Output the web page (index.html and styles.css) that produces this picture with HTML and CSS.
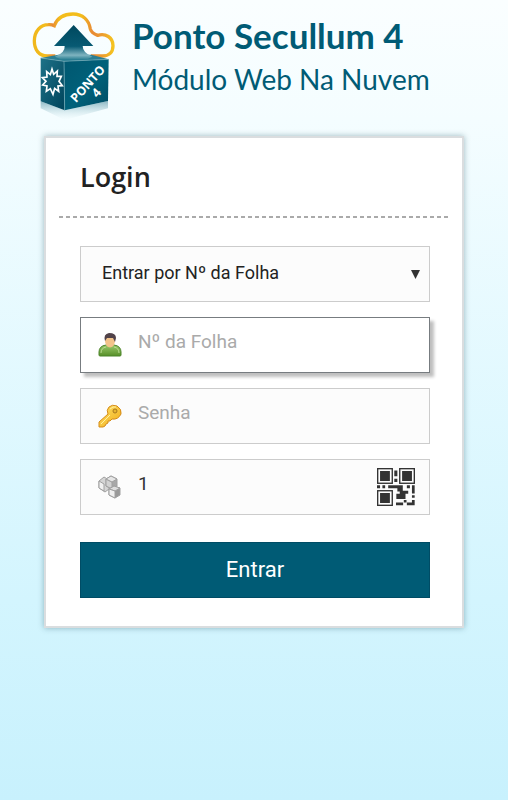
FILE: index.html
```
<!DOCTYPE html>
<html lang="pt-BR">
<head>
  <meta charset="UTF-8">
  <meta name="viewport" content="width=device-width, initial-scale=1.0">
  <title>Ponto Secullum 4</title>
  <link rel="stylesheet" href="styles.css">
</head>
<body>
  <header class="header">
    <svg class="logo" viewBox="0 0 330 375" aria-hidden="true">
      <defs>
        <linearGradient id="cloud" x1="0" y1="0" x2="1" y2="0">
          <stop offset="0" stop-color="#f0b71c"/>
          <stop offset=".14" stop-color="#f3bd1c"/>
          <stop offset=".23" stop-color="#e88a35"/>
          <stop offset=".32" stop-color="#f3bd1c"/>
          <stop offset=".6" stop-color="#f3bd1c"/>
          <stop offset=".74" stop-color="#e88a35"/>
          <stop offset=".86" stop-color="#ec9b30"/>
          <stop offset="1" stop-color="#f5c320"/>
        </linearGradient>
        <linearGradient id="arrow" x1="0" y1="0" x2="0" y2="1">
          <stop offset="0" stop-color="#00485e"/>
          <stop offset=".62" stop-color="#075a73"/>
          <stop offset=".88" stop-color="#7fb4c0"/>
          <stop offset="1" stop-color="#2f8295"/>
        </linearGradient>
        <linearGradient id="side" x1="0" y1="0" x2="1" y2="1">
          <stop offset="0" stop-color="#1e7288"/>
          <stop offset="1" stop-color="#00445b"/>
        </linearGradient>
        <linearGradient id="front" x1="0" y1="0" x2="1" y2="1">
          <stop offset="0" stop-color="#005770"/>
          <stop offset=".55" stop-color="#00617a"/>
          <stop offset="1" stop-color="#004b63"/>
        </linearGradient>
        <linearGradient id="shade" x1="0" y1="0" x2="0" y2="1">
          <stop offset="0" stop-color="#5d98a8" stop-opacity=".7"/>
          <stop offset="1" stop-color="#c9e5eb" stop-opacity="0"/>
        </linearGradient>
      </defs>
      <path d="M62 304L134 331L264 303V325L134 360L62 325Z" fill="url(#shade)"/>
      <path d="M106 168H82C56 168 43 148 43 123C43 93 62 74 85 74Q95 73 103 77C112 53 132 42 159 42C188 42 207 60 211 87Q213 98 233 106C257 98 279 113 279 137C279 157 267 168 247 168H213" fill="none" stroke="url(#cloud)" stroke-width="10"/>
      <path d="M62 174L115 164H214L266 178L132 184Z" fill="#2b7e92"/>
      <path d="M161 75L220 138H188Q188 158 217 170L202 178H122L105 170Q136 158 134 138H102Z" fill="url(#arrow)"/>
      <path d="M62 174L132 184L134 331L62 304Z" fill="url(#side)"/>
      <path d="M132 184L266 178L264 303L134 331Z" fill="url(#front)"/>
      <path d="M62 174L132 184L266 178M132 184L134 331" fill="none" stroke="#76adba" stroke-width="2"/>
      <path d="M96 207L101 223L112 213L111 229L124 229L117 244L127 257L114 258L116 274L104 265L99 283L91 266L79 274L81 258L68 255L78 244L67 233L81 231L80 215L91 224Z" fill="none" stroke="#fff" stroke-width="5"/>
      <g class="logo-text">
        <text x="168" y="310" transform="rotate(-48 168 310)">PONTO</text>
        <text x="232" y="295" transform="rotate(-48 232 295)">4</text>
      </g>
    </svg>
    <div class="brand">
      <h1>Ponto Secullum 4</h1>
      <p>Módulo Web Na Nuvem</p>
    </div>
  </header>

  <main class="card">
    <h2>Login</h2>
    <form class="login-form">
      <div class="field field-select">
        <select aria-label="Tipo de login">
          <option>Entrar por Nº da Folha</option>
        </select>
        <svg class="caret" viewBox="0 0 9 9" aria-hidden="true"><path d="M0 0H9L4.5 9Z" fill="#333"/></svg>
      </div>

      <div class="field active">
        <svg class="icon" viewBox="0 0 24 24" aria-hidden="true">
          <defs>
            <linearGradient id="shirt" x1="0" y1="0" x2="0" y2="1">
              <stop offset="0" stop-color="#9bc96b"/>
              <stop offset="1" stop-color="#568f28"/>
            </linearGradient>
          </defs>
          <path d="M1 22V19Q1 13 8 12H16Q23 13 23 19V22Q23 23 22 23H2Q1 23 1 22Z" fill="url(#shirt)" stroke="#4d852b"/>
          <path d="M3 20Q3 15 8 14M21 20Q21 15 16 14" fill="none" stroke="#b9da91"/>
          <path d="M8 12Q12 17 16 12L15 10H9Z" fill="#efbf83"/>
          <ellipse cx="12" cy="8" rx="5" ry="6" fill="#f2c38a"/>
          <path d="M7 8Q5 1 11 0Q18 0 18 5L17 9L15 5H9Z" fill="#514249"/>
        </svg>
        <input type="text" placeholder="Nº da Folha" aria-label="Nº da Folha">
      </div>

      <div class="field">
        <svg class="icon" viewBox="0 0 24 24" aria-hidden="true">
          <defs>
            <linearGradient id="gold" x1="0" y1="0" x2="1" y2="1">
              <stop offset="0" stop-color="#ffe36a"/>
              <stop offset="1" stop-color="#efaa15"/>
            </linearGradient>
          </defs>
          <path d="M11 3Q14 0 19 2Q24 5 23 10Q20 16 14 15L12 17L10 17V19L8 20L7 22L5 23H1V18L10 10Q8 6 11 3Z" fill="url(#gold)" stroke="#d58b18"/>
          <path d="M3 20L12 11M12 5Q15 2 18 3" fill="none" stroke="#fff0a0"/>
          <circle cx="17" cy="7" r="2" fill="#e7b52d" stroke="#a87820"/>
        </svg>
        <input type="password" placeholder="Senha" aria-label="Senha">
      </div>

      <div class="field">
        <svg class="icon" viewBox="0 0 24 24" aria-hidden="true">
          <g stroke="#a0a0a0" stroke-linejoin="round">
            <path d="M1 6L6 2L11 5V14L7 17L1 13Z" fill="#d5d5d5"/>
            <path d="M1 6L6 9V16L1 13Z" fill="#f1f1f1"/>
            <path d="M8 4L13 1L19 4V11L14 14L8 11Z" fill="#a8a8a8"/>
            <path d="M8 4L14 7V14L8 11Z" fill="#d2d2d2"/>
            <path d="M8 4L13 1L19 4L14 7Z" fill="#e6e6e6"/>
            <path d="M11 14L16 11L22 13V20L17 23L11 20Z" fill="#999"/>
            <path d="M11 14L16 11L22 13L17 16Z" fill="#ddd"/>
            <path d="M11 14L17 16V23L11 20Z" fill="#efefef"/>
          </g>
        </svg>
        <input type="text" value="1" aria-label="Número do banco">
        <button type="button" class="qr-button" aria-label="Ler QR Code">
          <svg viewBox="0 0 112 112" fill="#333" aria-hidden="true">
            <g fill="none" stroke="#333" stroke-width="4">
              <rect x="2" y="2" width="43" height="43"/>
              <rect x="67" y="2" width="43" height="43"/>
              <rect x="2" y="67" width="43" height="43"/>
            </g>
            <path d="M9 9H38V38H9ZM74 9H103V38H74ZM9 74H38V103H9Z"/>
            <path d="M51 7H60V24H51ZM51 32H60V41H51ZM0 51H9V60H0ZM16 51H24V60H16ZM33 51H76V69H60V60H33ZM88 51H97V60H88ZM103 51H111V75H103ZM67 67H92V76H84V91H57V76H67ZM103 80H111V88H103ZM103 94H111V110H88V102H103ZM79 94H87V102H79ZM56 102H77V110H56Z"/>
          </svg>
        </button>
      </div>

      <button type="submit" class="submit">Entrar</button>
    </form>
  </main>
</body>
</html>
```
FILE: styles.css
```
* {
  box-sizing: border-box;
}
html {
  min-height: 100%;
  background: linear-gradient(#fafeff 0, #f4fdff 15%, #d3f5fe 75%, #c8f1fd 100%);
}
body {
  max-width: 508px;
  margin: 0 auto;
  padding: 0 44px 32px;
  font-family: Roboto, sans-serif;
  color: #222;
}
.header {
  display: flex;
  height: 136px;
  margin-left: -24px;
}
.logo {
  flex: none;
  width: 110px;
  height: 125px;
}
.logo-text {
  font: bold 37px "Open Sans", sans-serif;
  fill: #fff;
}
.brand {
  padding: 11px 0 0 2px;
  color: #005b75;
  font-family: Lato, sans-serif;
  white-space: nowrap;
}
.brand h1 {
  margin: 0;
  font-size: 35px;
  line-height: 48px;
  font-weight: bold;
}
.brand p {
  margin: 0;
  font-size: 28px;
  line-height: 40px;
}
.card {
  padding: 0 12px 28px 13px;
  background: #fff;
  border: 2px solid #dadddf;
  box-shadow: 0 0 6px rgba(0, 60, 75, 0.35);
}
.card h2 {
  margin: 0;
  padding: 18px 21px 20px;
  background: repeating-linear-gradient(90deg, #aaa 0 4px, transparent 4px 7px) bottom / 100% 2px no-repeat;
  font-family: "Open Sans", sans-serif;
  font-size: 27px;
  line-height: 42px;
  font-weight: 600;
}
.login-form {
  display: flex;
  flex-direction: column;
  gap: 15px;
  padding: 28px 20px 0 21px;
}
.field {
  position: relative;
  display: flex;
  align-items: center;
  height: 56px;
  padding: 0 14px 0 17px;
  background: #fcfcfc;
  border: 1px solid #ccc;
}
.field.active {
  background: #fff;
  border-color: #777c80;
  box-shadow: 4px 4px 3px rgba(0, 0, 0, 0.25);
}
.field-select {
  padding: 0;
}
.field select {
  appearance: none;
  width: 100%;
  height: 100%;
  padding: 0 32px 4px 21px;
  border: 0;
  outline: 0;
  background: none;
  color: #222;
  font: 18px Roboto, sans-serif;
}
.caret {
  position: absolute;
  right: 9px;
  width: 9px;
  height: 9px;
  pointer-events: none;
}
.icon {
  flex: none;
  width: 24px;
  height: 24px;
}
.field input {
  flex: 1;
  min-width: 0;
  height: 100%;
  padding: 0 0 7px 16px;
  border: 0;
  outline: 0;
  background: none;
  color: #333;
  font: 19px Roboto, sans-serif;
}
.field input::placeholder {
  color: #aaa;
}
.qr-button {
  width: 38px;
  height: 38px;
  padding: 0;
  border: 0;
  background: none;
  cursor: pointer;
}
.qr-button svg {
  display: block;
}
.submit {
  height: 56px;
  margin-top: 12px;
  padding: 0 0 2px;
  border: 1px solid #004c65;
  background: #005b75;
  color: #fff;
  font: 22px Roboto, sans-serif;
  cursor: pointer;
}
```
